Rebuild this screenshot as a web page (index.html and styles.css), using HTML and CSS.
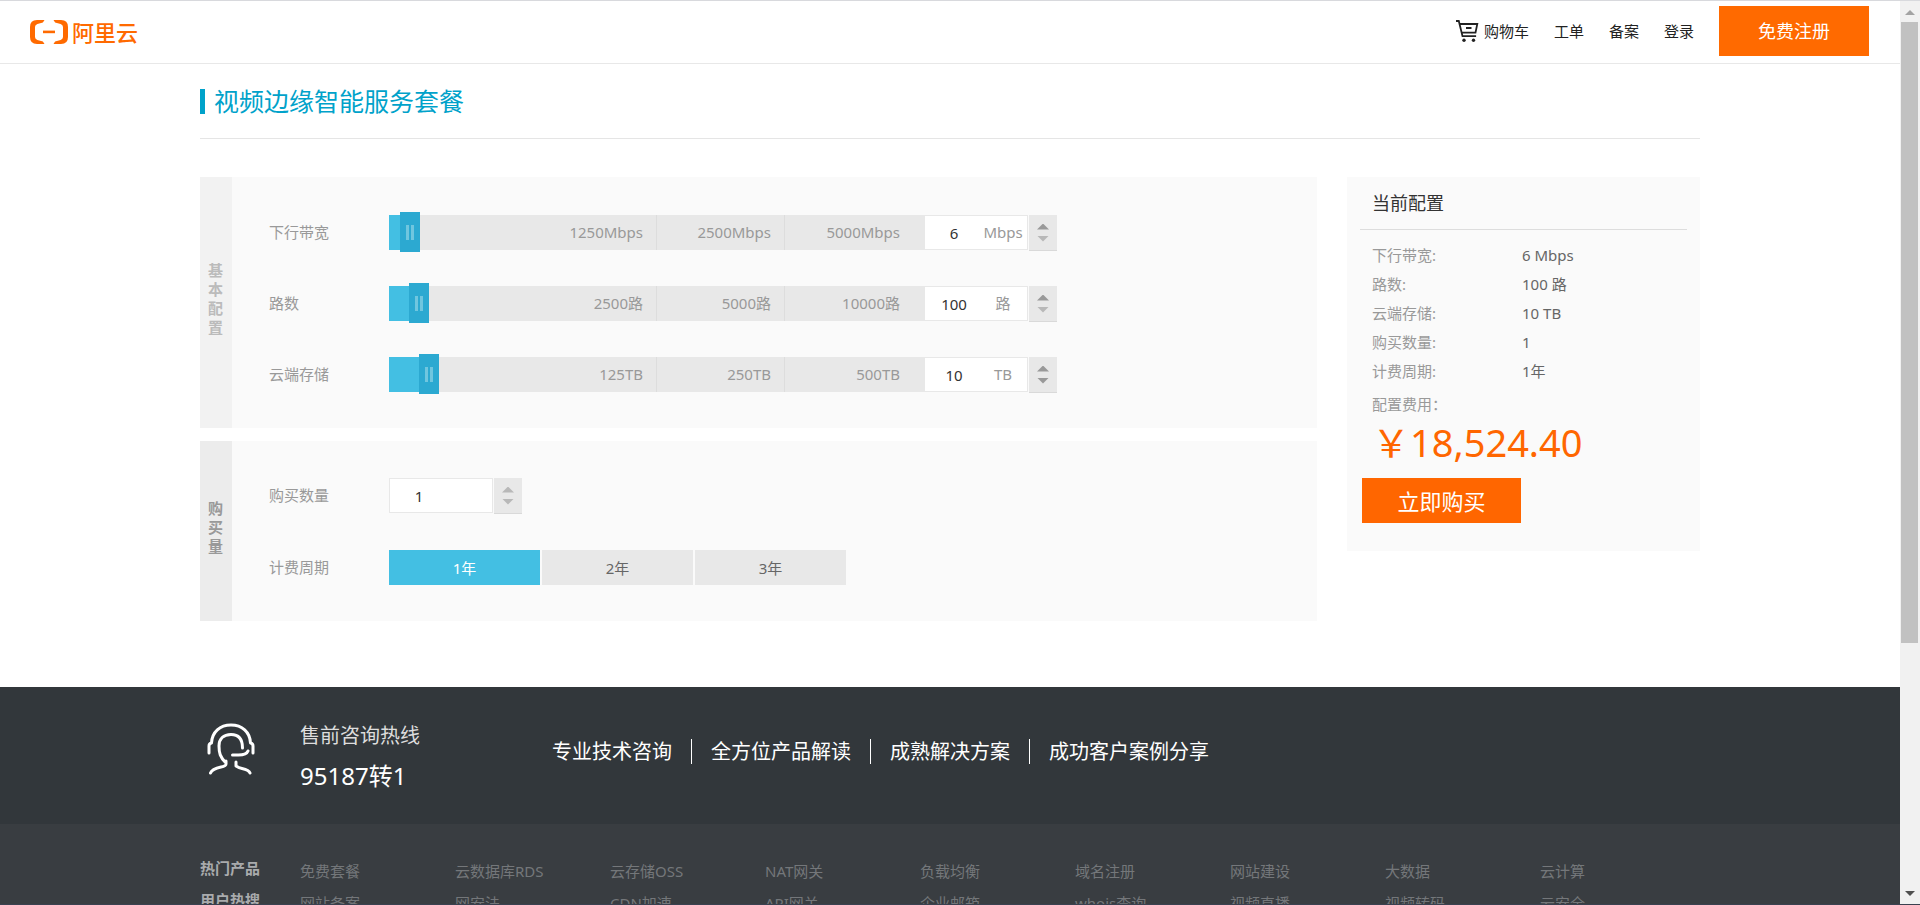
FILE: index.html
```
<!DOCTYPE html>
<html lang="zh-CN">
<head>
<meta charset="utf-8">
<title>视频边缘智能服务套餐</title>
<link rel="stylesheet" href="styles.css">
</head>
<body>
<div class="viewport">
  <div class="page">
    <header class="header">
      <a class="logo" href="#">
        <svg class="logo-mark" viewBox="0 0 38 24" aria-hidden="true">
          <path d="M14.500 0H7Q0 0 0 7v10q0 7 7 7h7.500l-1.600-2.500-5.500-1.500Q5 19.200 5 17V7q0-2.200 2.400-3l5.500-1.500z"/>
          <path d="M23.500 0H31q7 0 7 7v10q0 7-7 7h-7.500l1.600-2.500 5.500-1.500q2.400-.8 2.400-3V7q0-2.200-2.400-3l-5.500-1.500z"/>
          <path d="M13 10.600h12v2.600H13z"/>
        </svg>
        <span>阿里云</span>
      </a>
      <nav class="nav">
        <a class="cart" href="#">
          <svg class="cart-icon" viewBox="0 0 24 24" aria-hidden="true">
            <path d="M1 2h2.800l3.700 15.200h13.600M5 5h17.300l-1.800 8.600H7M11 9h5.500" fill="none" stroke="#222" stroke-width="1.800"/>
            <circle cx="9" cy="21.300" r="1.700" fill="#222"/><circle cx="18.500" cy="21.300" r="1.700" fill="#222"/>
          </svg>
          <span>购物车</span>
        </a>
        <a href="#">工单</a>
        <a href="#">备案</a>
        <a href="#">登录</a>
        <a class="register" href="#">免费注册</a>
      </nav>
    </header>

    <main class="container main">
      <div class="title-bar"><h1 class="title">视频边缘智能服务套餐</h1></div>
      <div class="columns">
        <form class="config">
          <section class="group">
            <h2 class="group-name">基本配置</h2>
            <div class="group-body">
              <div class="row">
                <label class="row-label" for="bw">下行带宽</label>
                <div class="track">
                  <span class="seg">1250Mbps</span><span class="seg">2500Mbps</span><span class="seg">5000Mbps</span>
                  <input class="range" type="range" min="0" max="516" value="11" aria-label="下行带宽滑块" style="--fill:11px">
                </div>
                <div class="field"><input class="num" id="bw" type="text" value="6"><span class="unit">Mbps</span></div>
                <div class="stepper"><button class="up" type="button" aria-label="增加"></button><button class="down off" type="button" aria-label="减少"></button></div>
              </div>
              <div class="row">
                <label class="row-label" for="ch">路数</label>
                <div class="track">
                  <span class="seg">2500路</span><span class="seg">5000路</span><span class="seg">10000路</span>
                  <input class="range" type="range" min="0" max="516" value="20" aria-label="路数滑块" style="--fill:20px">
                </div>
                <div class="field"><input class="num" id="ch" type="text" value="100"><span class="unit">路</span></div>
                <div class="stepper"><button class="up" type="button" aria-label="增加"></button><button class="down off" type="button" aria-label="减少"></button></div>
              </div>
              <div class="row">
                <label class="row-label" for="st">云端存储</label>
                <div class="track">
                  <span class="seg">125TB</span><span class="seg">250TB</span><span class="seg">500TB</span>
                  <input class="range" type="range" min="0" max="516" value="30" aria-label="云端存储滑块" style="--fill:30px">
                </div>
                <div class="field"><input class="num" id="st" type="text" value="10"><span class="unit">TB</span></div>
                <div class="stepper"><button class="up" type="button" aria-label="增加"></button><button class="down" type="button" aria-label="减少"></button></div>
              </div>
            </div>
          </section>

          <section class="group purchase">
            <h2 class="group-name">购买量</h2>
            <div class="group-body">
              <div class="row">
                <label class="row-label" for="qty">购买数量</label>
                <div class="field boxed"><input class="num" id="qty" type="text" value="1"></div>
                <div class="stepper"><button class="up off" type="button" aria-label="增加"></button><button class="down off" type="button" aria-label="减少"></button></div>
              </div>
              <div class="row">
                <span class="row-label">计费周期</span>
                <div class="periods">
                  <button class="period active" type="button">1年</button>
                  <button class="period" type="button">2年</button>
                  <button class="period" type="button">3年</button>
                </div>
              </div>
            </div>
          </section>
        </form>

        <aside class="summary">
          <h2 class="summary-title">当前配置</h2>
          <dl class="summary-list">
            <dt>下行带宽:</dt><dd>6 Mbps</dd>
            <dt>路数:</dt><dd>100 路</dd>
            <dt>云端存储:</dt><dd>10 TB</dd>
            <dt>购买数量:</dt><dd>1</dd>
            <dt>计费周期:</dt><dd>1年</dd>
          </dl>
          <p class="fee">配置费用：</p>
          <p class="price">￥18,524.40</p>
          <button class="buy" type="button">立即购买</button>
        </aside>
      </div>
    </main>

    <footer class="footer">
      <div class="hotline">
        <div class="container hotline-inner">
          <svg class="agent" viewBox="0 0 48 52" aria-hidden="true">
            <path d="M2 30V23q0-2.500 2.500-3C5 9 13 2 24 2s19 7 19.500 18q2.500.500 2.500 3v7M19 40C13 34 12 30 12 23c0-7 4.500-11.500 12-11.500S35.500 16 35.500 25M25.500 32h6q8 0 9.500-4M19 38v3q0 2-5 3-9 2-10.500 6M29 39v4q3 2 6 2.500 7 1.500 8 4.500"/>
          </svg>
          <div class="phone">
            <p class="phone-label">售前咨询热线</p>
            <p class="phone-number">95187转1</p>
          </div>
          <ul class="services">
            <li>专业技术咨询</li><li>全方位产品解读</li><li>成熟解决方案</li><li>成功客户案例分享</li>
          </ul>
        </div>
      </div>
      <div class="container links">
        <div class="link-row">
          <h3>热门产品</h3>
          <a href="#">免费套餐</a><a href="#">云数据库RDS</a><a href="#">云存储OSS</a><a href="#">NAT网关</a><a href="#">负载均衡</a><a href="#">域名注册</a><a href="#">网站建设</a><a href="#">大数据</a><a href="#">云计算</a>
        </div>
        <div class="link-row">
          <h3>用户热搜</h3>
          <a href="#">网站备案</a><a href="#">网安法</a><a href="#">CDN加速</a><a href="#">API网关</a><a href="#">企业邮箱</a><a href="#">whois查询</a><a href="#">视频直播</a><a href="#">视频转码</a><a href="#">云安全</a>
        </div>
      </div>
    </footer>
  </div>
  <div class="scrollbar" aria-hidden="true">
    <svg class="arrow arrow-up" viewBox="0 0 10 5"><path d="M5 0l5 5H0z"/></svg>
    <div class="scroll-track"><div class="scroll-thumb"></div></div>
    <svg class="arrow arrow-down" viewBox="0 0 10 5"><path d="M0 0h10L5 5z"/></svg>
  </div>
</div>
</body>
</html>
```
FILE: styles.css
```
* { box-sizing: border-box; margin: 0; padding: 0; }
body, input, button { font-family: "Noto Sans", "Noto Sans CJK SC", sans-serif; font-size: 15px; }
body { line-height: 20px; color: #333; background: #fff; }
a { color: inherit; text-decoration: none; }
button { border: 0; cursor: pointer; }
ul { list-style: none; }

.viewport { display: flex; height: 100vh; overflow: hidden; border-top: 1px solid #d8d9dd; border-bottom: 1px solid #3a4150; }
.page { flex: 1; min-width: 0; overflow: hidden; }
.container { max-width: 1500px; margin: 0 auto; }

.header { display: flex; justify-content: space-between; align-items: center; height: 63px; padding: 0 31px 0 30px; border-bottom: 1px solid #e8e8e8; }
.logo { display: flex; align-items: center; gap: 4px; color: #ff6a00; font-size: 22px; font-weight: 500; line-height: 22px; }
.logo-mark { width: 38px; height: 24px; fill: #ff6a00; }
.nav { display: flex; align-items: center; gap: 25px; color: #222; padding-bottom: 2px; line-height: 22px; }
.cart { display: flex; align-items: center; gap: 5px; }
.cart-icon { width: 24px; height: 24px; }
.register { width: 150px; line-height: 50px; background: #ff6a00; color: #fff; font-size: 18px; text-align: center; }

.main { padding-bottom: 66px; }
.title-bar { padding: 25px 0 24px; border-bottom: 1px solid #e5e5e5; }
.title { border-left: 5px solid #00a2ca; padding-left: 9px; font-size: 25px; font-weight: 400; line-height: 25px; color: #00a2ca; }
.columns { display: flex; align-items: flex-start; gap: 30px; padding-top: 38px; }
.config { flex: 1; display: flex; flex-direction: column; gap: 13px; }

.group { display: flex; background: #fafafa; }
.group-name { display: flex; align-items: center; width: 32px; padding: 0 8px 8px; background: #f2f2f2; color: #bbb; font-size: 15px; font-weight: 700; line-height: 19px; }
.purchase .group-name { background: #ececec; color: #999; }
.group-body { flex: 1; display: flex; flex-direction: column; gap: 36px; padding: 38px 0 36px 37px; }
.purchase .group-body { gap: 37px; padding-top: 37px; }
.row { display: flex; height: 35px; }
.row-label { width: 120px; color: #999; line-height: 35px; }

.track { position: relative; display: grid; grid-template-columns: 268px 128px 140px; height: 35px; background: #e8e8e8; }
.seg { padding-right: 13px; border-right: 1px solid #ddd; color: #999; line-height: 35px; text-align: right; }
.seg:nth-child(3) { padding-right: 25px; border-right: 0; }
.range { position: absolute; inset: -3px 0; width: 100%; height: 40px; appearance: none; background: linear-gradient(#43bfe3, #43bfe3) 0 3px / var(--fill) 35px no-repeat; }
.range::-webkit-slider-thumb { appearance: none; width: 20px; height: 40px; background: linear-gradient(#70c6df, #70c6df) 6px 13px / 3px 15px no-repeat, linear-gradient(#70c6df, #70c6df) 11px 13px / 3px 15px no-repeat, #2ca9d1; }

.field { display: flex; width: 103px; border: 1px solid #e8e8e8; border-left: 0; background: #fff; }
.boxed { width: 104px; border-left: 1px solid #e8e8e8; }
.num { width: 58px; border: 0; background: none; color: #333; text-align: center; outline: 0; }
.unit { width: 40px; color: #999; line-height: 33px; display: flex; justify-content: center; }
.stepper { display: flex; flex-direction: column; justify-content: center; gap: 6px; width: 28px; height: 36px; margin-left: 1px; padding: 0 8px; background: #e8e8e8; border-bottom: 1px solid #d9d9d9; }
.stepper button { height: 6px; background: #999; }
.up { clip-path: polygon(50% 0, 100% 100%, 0 100%); }
.down { clip-path: polygon(0 0, 100% 0, 50% 100%); }
.stepper .off { background: #b8b8b8; }
.periods { display: flex; gap: 2px; }
.period { width: 151px; background: #e8e8e8; color: #666; }
.period.active { background: #43bfe3; color: #fff; }

.summary { width: 353px; padding: 0 13px 28px; background: #fafafa; }
.summary-title { padding: 0 12px; border-bottom: 1px solid #ddd; font-size: 18px; font-weight: 400; line-height: 52px; }
.summary-list { display: grid; grid-template-columns: 150px 1fr; row-gap: 9px; padding: 15px 12px 0; }
.summary-list dt, .fee { color: #999; }
.summary-list dd { color: #666; }
.fee { padding: 13px 12px 0; }
.price { padding: 7px 12px 14px; color: #ff6600; font-size: 38px; line-height: 43px; }
.buy { display: block; width: 159px; height: 45px; margin-left: 2px; padding-bottom: 2px; background: #ff6600; color: #fff; font-size: 22px; }

.footer { min-height: 300px; background: #393d41; }
.hotline { background: #32373b; }
.hotline-inner { display: flex; align-items: flex-start; padding: 36px 7px 25px; }
.agent { width: 48px; height: 52px; margin-right: 45px; fill: none; stroke: #fff; stroke-width: 3; stroke-linecap: round; stroke-linejoin: round; }
.phone { width: 233px; padding-bottom: 8px; }
.phone-label { color: #ddd; font-size: 20px; line-height: 26px; }
.phone-number { padding-top: 12px; color: #fff; font-size: 24px; line-height: 30px; }
.services { display: flex; padding-top: 16px; color: #fff; font-size: 20px; line-height: 25px; }
.services li { padding: 0 19px; border-left: 1px solid #fff; }
.services li:first-child { border-left: 0; }
.links { padding-top: 34px; }
.link-row { display: grid; grid-template-columns: 100px repeat(9, 155px); height: 32px; color: #74777a; }
.link-row h3 { color: #a9abad; font-size: 15px; line-height: 20px; }
.link-row a { line-height: 26px; }

.scrollbar { display: flex; flex-direction: column; align-items: center; width: 20px; padding: 9px 2px 8px 1px; background: #f1f1f1; }
.arrow { width: 10px; height: 5px; flex: none; }
.arrow-up { fill: #a3a3a3; }
.arrow-down { fill: #505050; }
.scroll-track { flex: 1; width: 100%; padding: 7px 0; }
.scroll-thumb { height: 72%; background: #c1c1c1; }
```
